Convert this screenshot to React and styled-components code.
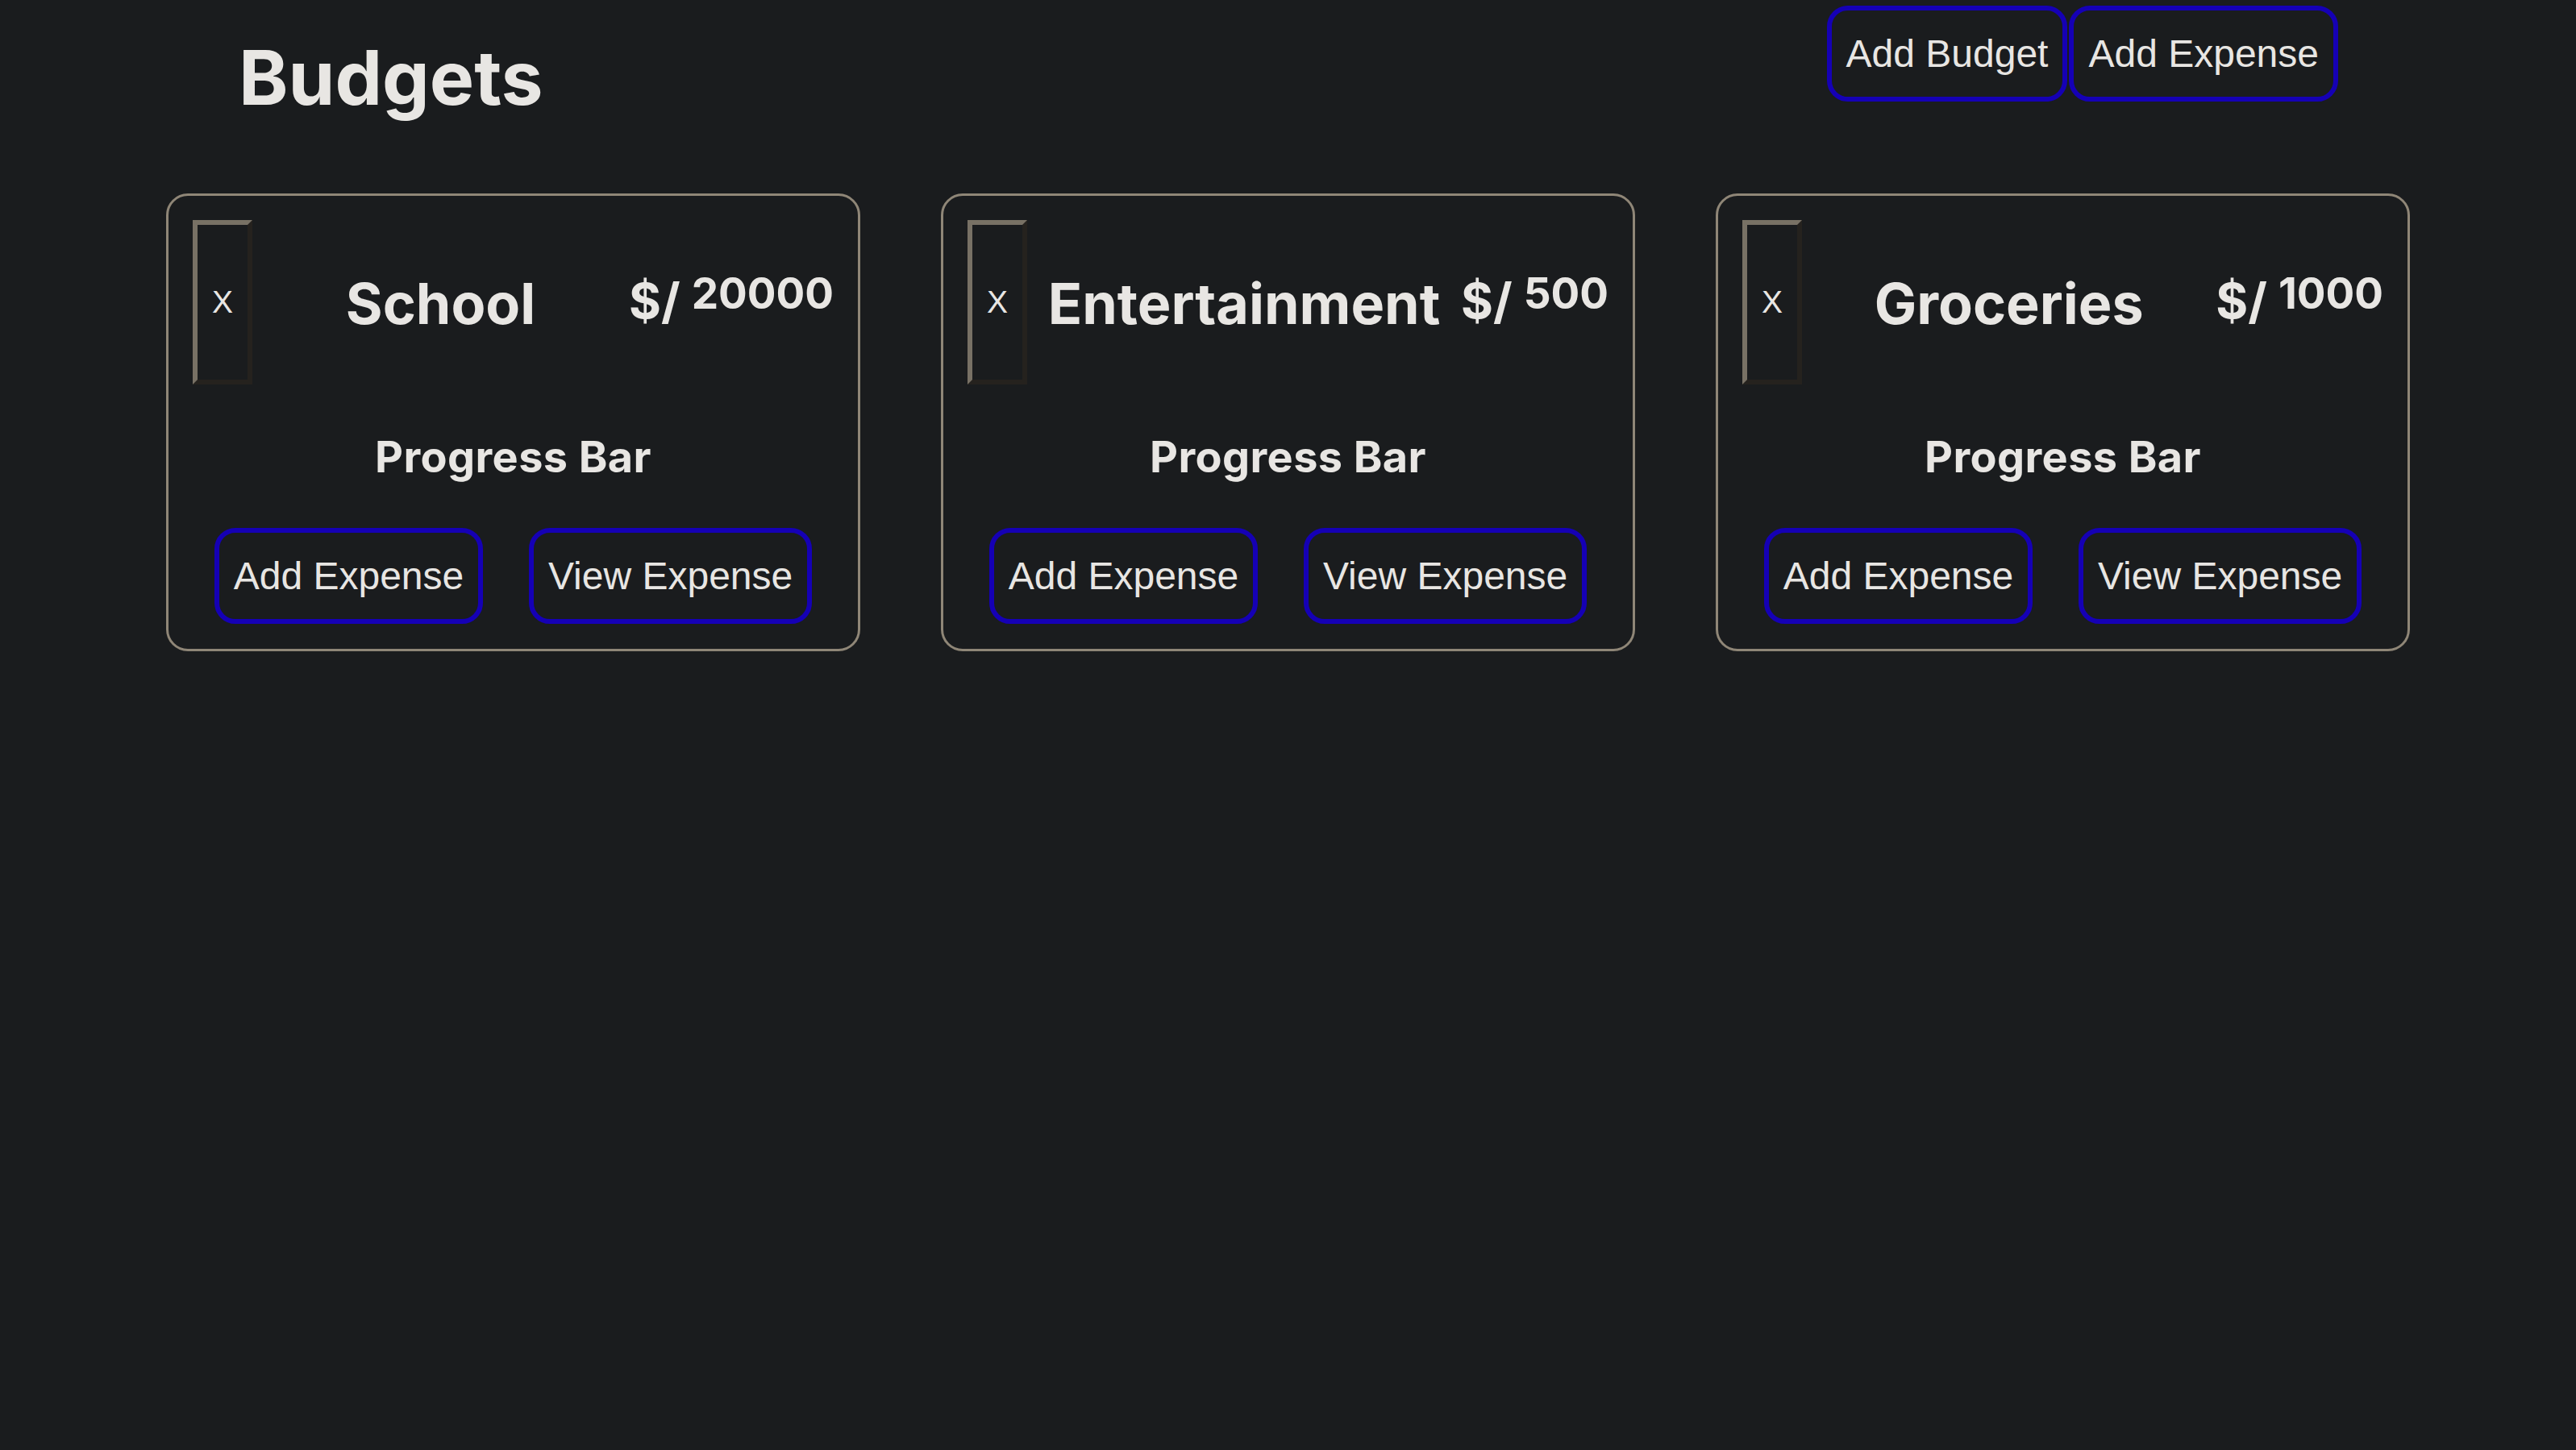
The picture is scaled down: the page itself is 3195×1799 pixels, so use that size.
import React from "react";
import styled, { createGlobalStyle } from "styled-components";

const GlobalStyle = createGlobalStyle`
  html, body {
    margin: 0;
    padding: 0;
    background: #1a1c1e;
  }
  body {
    color: #e8e6e3;
    font-family: Inter, "Noto Sans", sans-serif;
    min-height: 1799px;
  }
  * { box-sizing: border-box; }
`;

const Page = styled.div`
  min-height: 1799px;
  background: #1a1c1e;
`;

const Header = styled.header`
  display: flex;
  justify-content: space-between;
  align-items: flex-start;
  padding: 7px 295px 0 296px;
`;

const Title = styled.h1`
  margin: 33px 0 0;
  font-family: Inter, sans-serif;
  font-weight: 700;
  font-size: 93px;
  line-height: normal;
  color: #e8e6e3;
`;

const HeaderActions = styled.div`
  display: flex;
  gap: 2px;
`;

const OutlineButton = styled.button`
  font-family: "Liberation Sans", Arial, sans-serif;
  font-size: 48px;
  line-height: normal;
  color: #e8e6e3;
  background: transparent;
  border: 6px solid #1500b5;
  border-radius: 26px;
  padding: 26px 18px;
  cursor: pointer;
`;

const CardRow = styled.main`
  display: flex;
  justify-content: center;
  gap: 100px;
  margin-top: 88px;
`;

const Card = styled.section`
  width: 861px;
  border: 3px solid #8f8677;
  border-radius: 27px;
  padding: 30px 0 31px;
`;

const CardHeader = styled.div`
  display: flex;
  justify-content: space-between;
  align-items: stretch;
  padding: 0 30px;
`;

const CloseButton = styled.button`
  font-family: "Liberation Sans", Arial, sans-serif;
  font-size: 39px;
  line-height: normal;
  color: #e8e6e3;
  background: transparent;
  padding: 0 18px;
  border-style: solid;
  border-width: 6px;
  border-color: #787165 #25221e #25221e #787165;
  cursor: pointer;
`;

const Name = styled.h2`
  margin: 61px 0 57px;
  font-weight: 700;
  font-size: 70px;
  line-height: 86px;
  color: #e8e6e3;
`;

const Amount = styled.div`
  display: flex;
  align-items: flex-start;
  gap: 14px;
`;

const Currency = styled.span`
  margin-top: 63px;
  font-weight: 700;
  font-size: 61px;
  line-height: normal;
`;

const Total = styled.h3`
  margin: 59px 0 0;
  font-weight: 700;
  font-size: 53px;
  line-height: normal;
  color: #e8e6e3;
`;

const ProgressLabel = styled.h3`
  margin: 58px 0 56px;
  text-align: center;
  font-weight: 700;
  font-size: 54px;
  letter-spacing: 0.4px;
  line-height: 64px;
  color: #e8e6e3;
`;

const CardActions = styled.div`
  display: flex;
  justify-content: space-evenly;
`;

const budgets = [
  { name: "School", total: 20000 },
  { name: "Entertainment", total: 500 },
  { name: "Groceries", total: 1000 },
];

function BudgetCard({ name, total }) {
  return (
    <Card>
      <CardHeader>
        <CloseButton>X</CloseButton>
        <Name>{name}</Name>
        <Amount>
          <Currency>$/</Currency>
          <Total>{total}</Total>
        </Amount>
      </CardHeader>
      <ProgressLabel>Progress Bar</ProgressLabel>
      <CardActions>
        <OutlineButton>Add Expense</OutlineButton>
        <OutlineButton>View Expense</OutlineButton>
      </CardActions>
    </Card>
  );
}

export default function App() {
  return (
    <Page>
      <GlobalStyle />
      <Header>
        <Title>Budgets</Title>
        <HeaderActions>
          <OutlineButton>Add Budget</OutlineButton>
          <OutlineButton>Add Expense</OutlineButton>
        </HeaderActions>
      </Header>
      <CardRow>
        {budgets.map((b) => (
          <BudgetCard key={b.name} {...b} />
        ))}
      </CardRow>
    </Page>
  );
}
